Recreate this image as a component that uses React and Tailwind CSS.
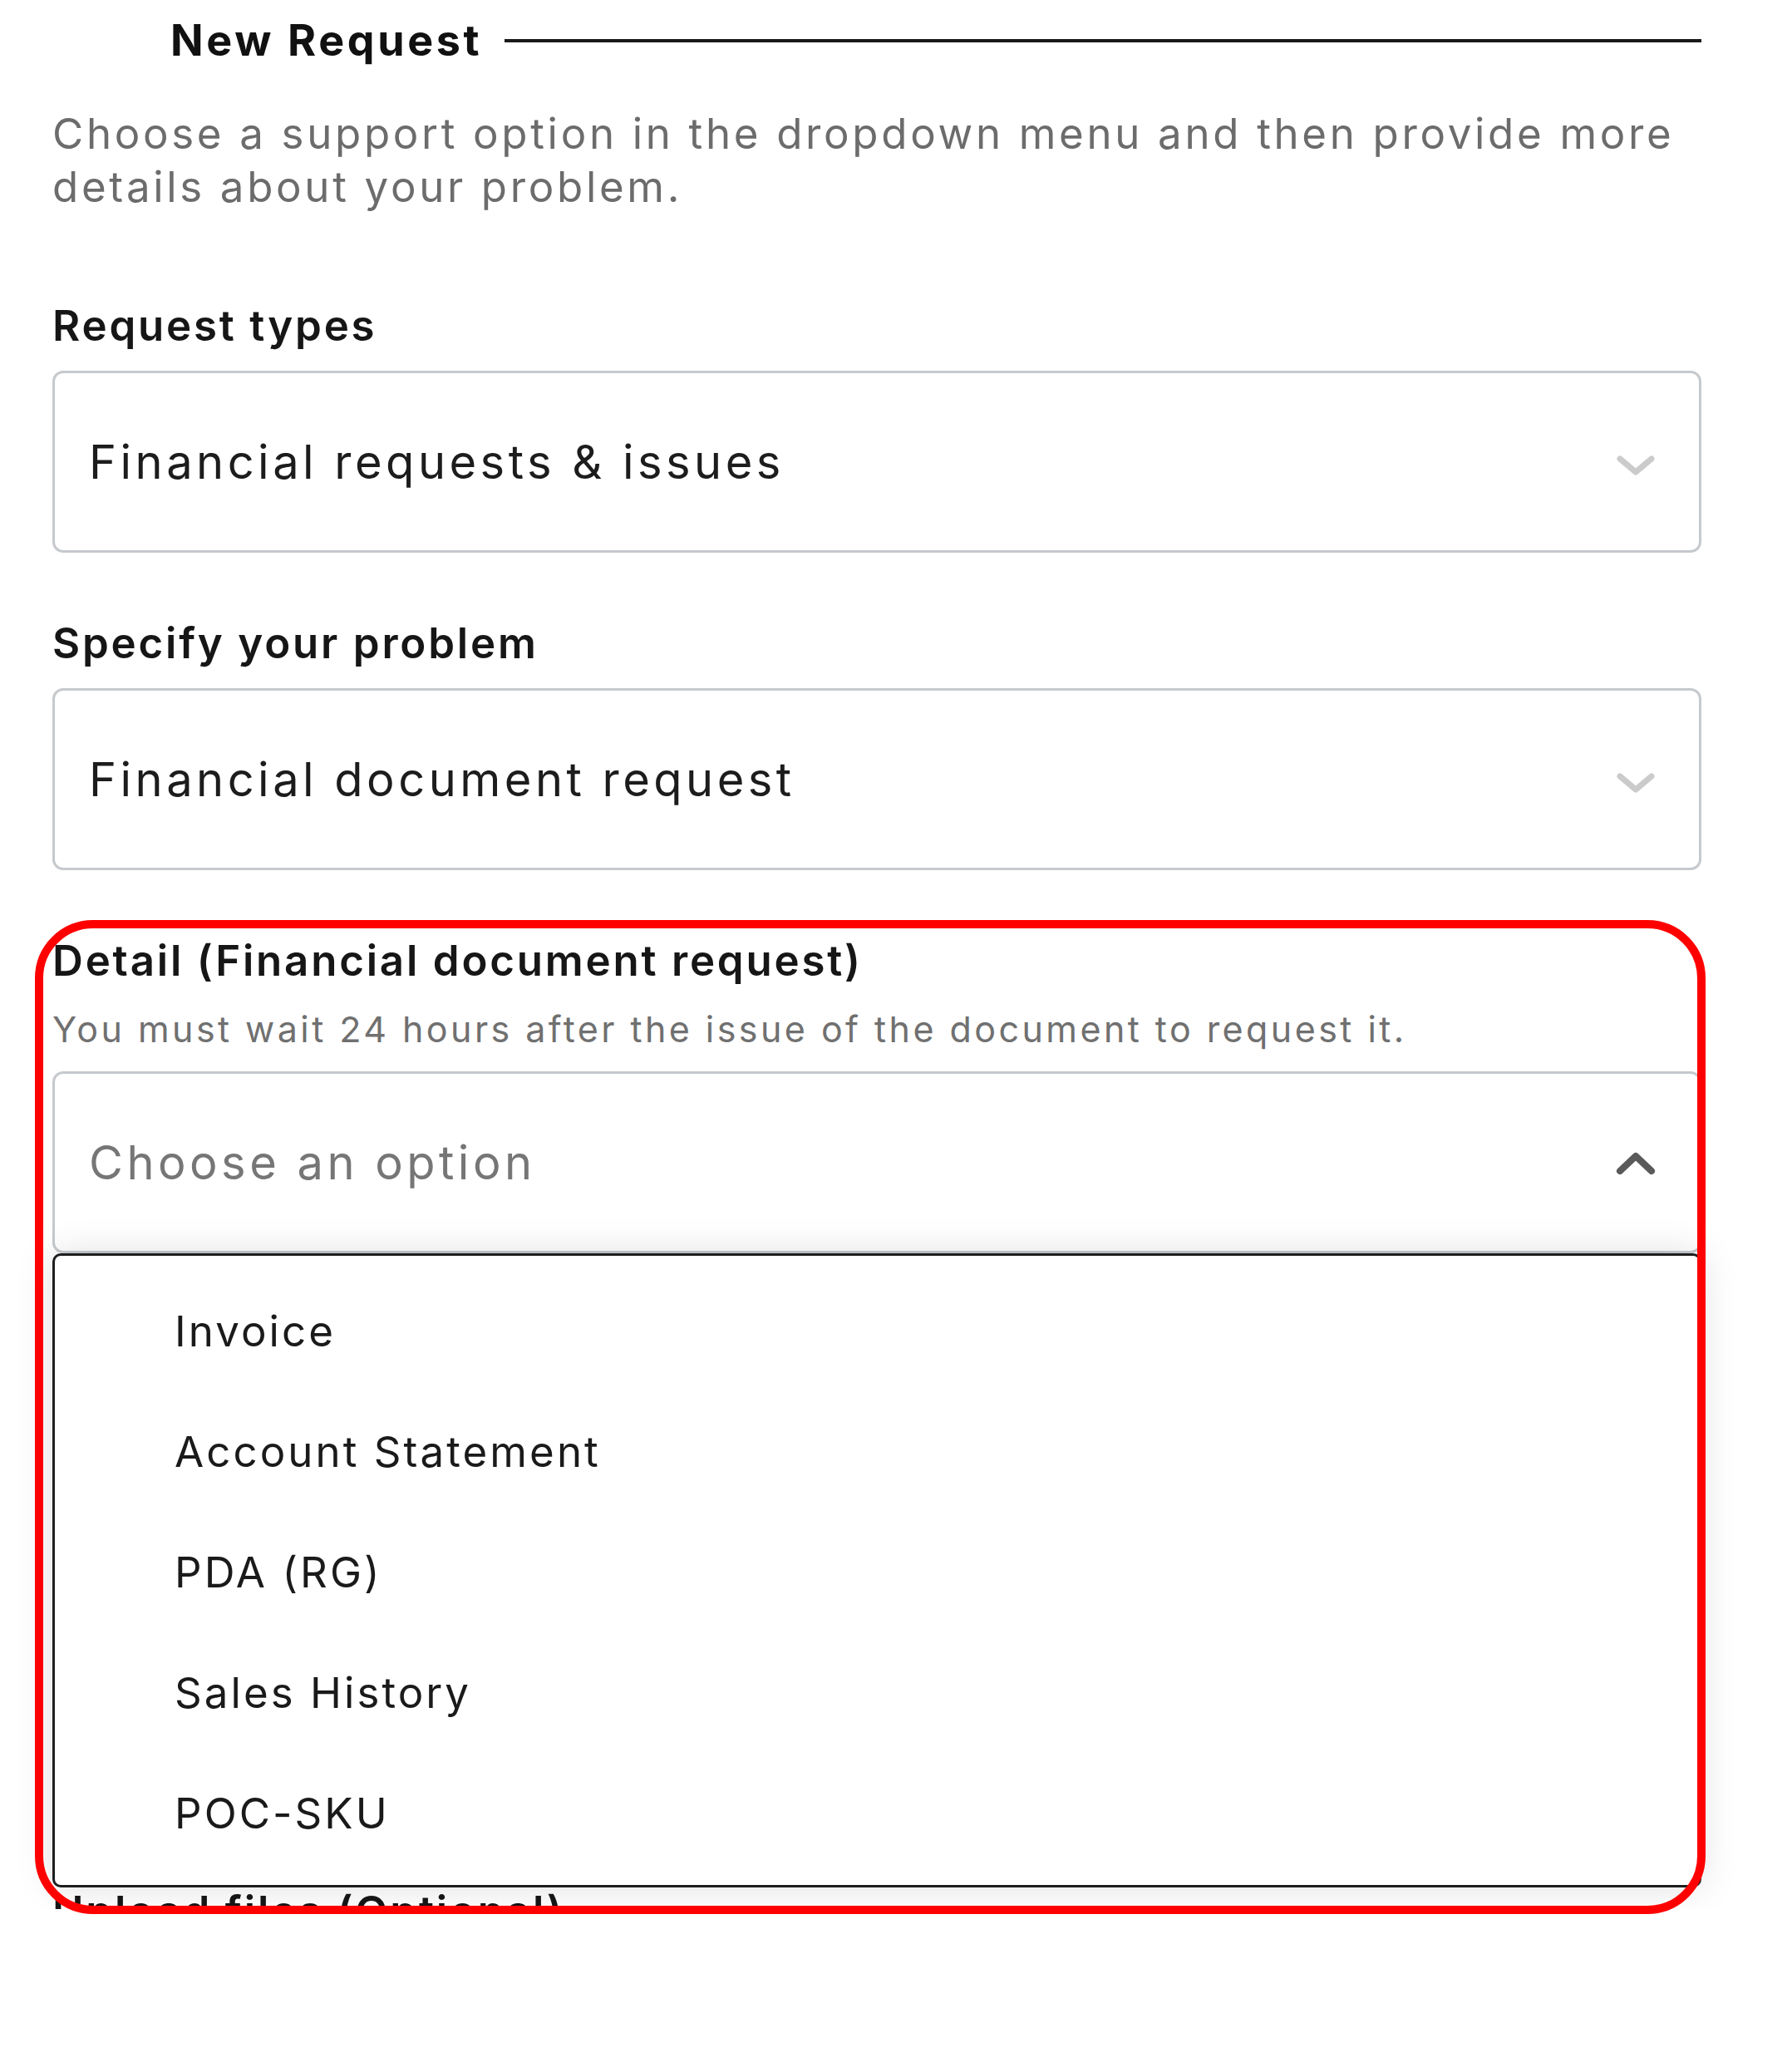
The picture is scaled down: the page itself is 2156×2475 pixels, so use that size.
import React from 'react';

const OPTIONS = ['Invoice', 'Account Statement', 'PDA (RG)', 'Sales History', 'POC-SKU'];

function ChevronDown({ className }) {
  return (
    <svg width="48" height="28" viewBox="0 0 48 28" fill="none" className={className}>
      <polyline points="5,5 24,21 43,5" stroke="currentColor" strokeWidth="7" strokeLinecap="round" strokeLinejoin="round" />
    </svg>
  );
}

function ChevronUp({ className }) {
  return (
    <svg width="48" height="30" viewBox="0 0 48 30" fill="none" className={className}>
      <polyline points="5,25 24,7 43,25" stroke="currentColor" strokeWidth="8" strokeLinecap="round" strokeLinejoin="round" />
    </svg>
  );
}

function Label({ children, className = '' }) {
  return (
    <div className={`text-[51px] leading-[60px] font-semibold tracking-[0.055em] text-[#161616] ${className}`}>{children}</div>
  );
}

function Select({ value, placeholder, open }) {
  return (
    <div className="flex h-[219px] items-center justify-between rounded-[13px] border-[3px] border-[#c6c9cd] bg-white pl-[41px] pr-[52px]">
      {value ? (
        <span className="text-[56px] tracking-[0.08em] text-[#1c1c1c]">{value}</span>
      ) : (
        <span className="text-[56px] tracking-[0.08em] text-[#767676]">{placeholder}</span>
      )}
      {open ? <ChevronUp className="text-[#5a5a5a]" /> : <ChevronDown className="mt-[10px] text-[#cbcbcb]" />}
    </div>
  );
}

export default function App() {
  return (
    <div className="relative h-[2475px] w-[2156px] bg-white font-['Inter','Noto_Sans',sans-serif]">
      <div className="h-[2297px] overflow-hidden">
        <div className="ml-[63px] w-[1984px] pt-[11px]">
          {/* heading */}
          <div className="flex items-center">
            <h1 className="ml-[142px] text-[52px] leading-[76px] font-bold tracking-[0.07em] text-[#111]">New Request</h1>
            <div className="ml-[27px] h-[4px] flex-1 bg-[#1a1a1a]" />
          </div>

          <p className="mt-[42px] text-[51px] leading-[64px] tracking-[0.072em] text-[#6c6c6c]">
            Choose a support option in the dropdown menu and then provide more details about your problem.
          </p>

          <Label className="mt-[105px] mb-[24px]">Request types</Label>
          <Select value="Financial requests & issues" />

          <Label className="mt-[79px] mb-[24px]">Specify your problem</Label>
          <Select value="Financial document request" />

          <Label className="mt-[79px]">Detail (Financial document request)</Label>
          <p className="mt-[25px] mb-[24px] text-[43px] leading-[54px] tracking-[0.08em] text-[#707070]">
            You must wait 24 hours after the issue of the document to request it.
          </p>

          <div className="relative">
            <Select placeholder="Choose an option" open />

            {/* open menu */}
            <div className="absolute left-0 right-0 top-full z-10 h-[763px] rounded-[10px] border-[3px] border-[#1e1e1e] bg-white pt-[19px] pb-[13px] shadow-[0_0_45px_rgba(0,0,0,0.13)]">
              {OPTIONS.map((o) => (
                <div key={o} className="flex h-[145px] items-center pl-[144px] text-[51px] tracking-[0.06em] text-[#1a1a1a]">
                  {o}
                </div>
              ))}
            </div>
          </div>

          <Label className="mt-[79px] mb-[24px]">Description</Label>
          <div className="h-[520px] rounded-[13px] border-[3px] border-[#c6c9cd]" />

          <Label className="mt-[79px]">Upload files (Optional)</Label>
        </div>
      </div>

      {/* annotation */}
      <div className="pointer-events-none absolute left-[42px] top-[1107px] z-20 h-[1196px] w-[2010px] rounded-[70px] border-[10px] border-[#ff0000]" />
    </div>
  );
}
